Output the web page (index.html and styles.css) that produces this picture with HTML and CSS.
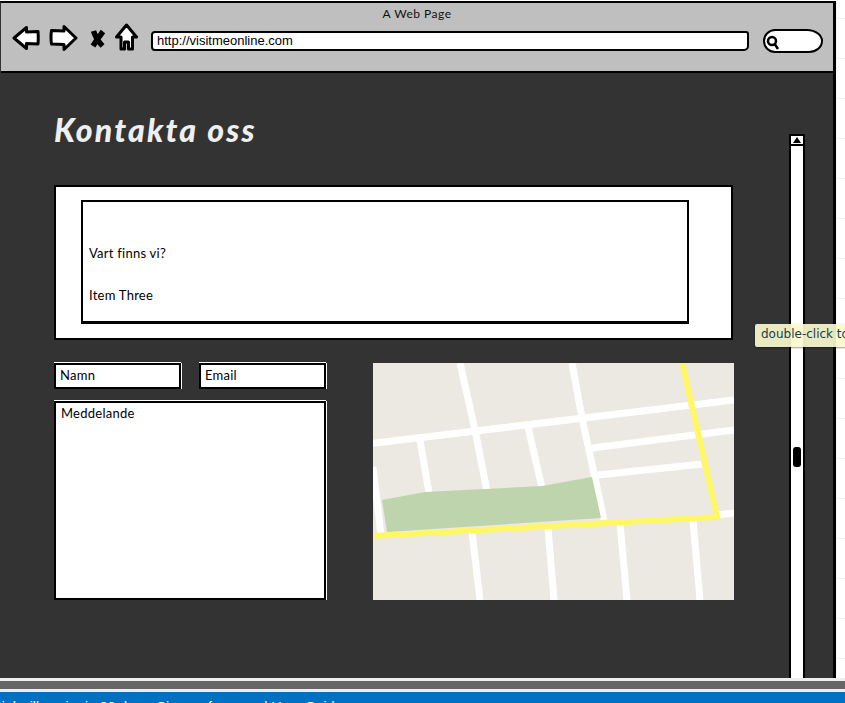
FILE: index.html
```html
<!DOCTYPE html>
<html lang="sv">
<head>
<meta charset="utf-8">
<title>A Web Page</title>
<link rel="stylesheet" href="styles.css">
</head>
<body>
<div class="stage">
  <div class="window">
    <header class="chrome">
      <div class="chrome-title">A Web Page</div>
      <div class="toolbar">
        <svg class="ico ico-back" viewBox="0 0 28 26"><path d="M2 13 L14.500 2.500 L14.500 7 L26 6.500 Q26.500 13 26 19 L14.500 18.500 L14.500 23.500 Z"/></svg>
        <svg class="ico ico-fwd" viewBox="0 0 29 28"><path d="M27 14 L15 2.500 L15 7 L2.500 6.500 Q1.500 13 2.500 20 L15 20.500 L15 25.500 Z"/></svg>
        <svg class="ico ico-x" viewBox="0 0 16 19"><path d="M3.500 2 Q6 10 12.500 17 M13 2.500 Q8 9 3 17"/></svg>
        <svg class="ico ico-home" viewBox="0 0 23 28"><path d="M11.500 2 L21.500 14 L17.500 14 L17.500 26 L13.500 26 L13.500 19 L9.500 19 L9.500 26 L6 26 L6 14 L1.500 14 Z"/></svg>
        <div class="url">http://visitmeonline.com</div>
        <div class="search">
          <svg class="search-ico" viewBox="0 0 14 15"><circle cx="6" cy="6" r="4"/><path d="M9 9.500 L12 14"/></svg>
        </div>
      </div>
    </header>
    <main class="content">
      <div class="column">
        <h1 class="heading">Kontakta oss</h1>
        <section class="panel">
          <div class="panel-inner">
            <p class="item">Vart finns vi?</p>
            <p class="item">Item Three</p>
          </div>
        </section>
        <div class="lower">
          <form class="contact">
            <div class="fields">
              <div class="field">Namn</div>
              <div class="field">Email</div>
            </div>
            <div class="message">Meddelande</div>
          </form>
          <svg class="map" viewBox="0 0 361 237">
            <rect class="map-land" width="361" height="237"/>
            <g class="map-roads">
              <path d="M0 80.300 L361 37"/>
              <path d="M87 0 L102 67 L114 128"/>
              <path d="M99 169 L107 237"/>
              <path d="M199 0 L209 55 L222 115 L231 157"/>
              <path d="M47 77 L56 130"/>
              <path d="M155 64 L169 125"/>
              <path d="M0 104 L8 172"/>
              <path d="M219 85 L361 67"/>
              <path d="M225 112 L329 101"/>
              <path d="M175 164 L181 237"/>
              <path d="M247 160 L254 237"/>
              <path d="M320 157 L327 237"/>
              <path d="M345 152 L361 150"/>
            </g>
            <path class="map-park" d="M9 137 L52 129 L169 123 L219 114 L228 155 L14 169 Z"/>
            <path class="map-highway" d="M0 173 L344 154 L309 0"/>
          </svg>
        </div>
      </div>
      <div class="scrollbar">
        <div class="scroll-up"><span class="scroll-arrow"></span></div>
        <div class="scroll-thumb"></div>
      </div>
    </main>
  </div>
  <div class="tooltip">double-click to edit</div>
  <div class="gutter"></div>
</div>
<footer class="bottom">
  <div class="bottom-grey"></div>
  <div class="notice"><span class="notice-text">Your trial will expire in 30 days. Sign up for more | User Guide</span></div>
</footer>
</body>
</html>
```
FILE: styles.css
```css
* { box-sizing: border-box; }
html, body { margin: 0; height: 100%; }
body {
  width: 845px;
  height: 703px;
  overflow: hidden;
  display: flex;
  flex-direction: column;
  background: #fff;
  font-family: "Lato", "Open Sans", sans-serif;
}
.stage {
  position: relative;
  flex: none;
  height: 678px;
  display: flex;
  overflow: hidden;
  padding-top: 1px;
}
.window {
  flex: none;
  width: 836px;
  display: flex;
  flex-direction: column;
  border-top: 2px solid #000;
  border-right: 3px solid #000;
  border-left: 1px solid #333;
  background: #333;
}
.gutter {
  flex: 1;
  margin-top: -1px;
  background-color: #fff;
  background-image:
    linear-gradient(#f2f2f2 1px, transparent 1px),
    linear-gradient(90deg, #f7f7f7 1px, transparent 1px);
  background-size: 40px 40px;
  background-position: 0 18px;
}
.chrome {
  flex: none;
  height: 70px;
  background: #bfbfbf;
  border-bottom: 2px solid #000;
  display: flex;
  flex-direction: column;
}
.chrome-title {
  text-align: center;
  font-size: 12px;
  line-height: 15px;
  padding-top: 3px;
  height: 20px;
  color: #111;
  letter-spacing: .5px;
}
.toolbar {
  display: flex;
  align-items: center;
  padding-left: 11px;
  height: 30px;
}
.ico { flex: none; fill: #fff; stroke: #000; stroke-width: 3; stroke-linejoin: round; }
.ico-back { width: 28px; height: 26px; margin-right: 9px; }
.ico-fwd { width: 29px; height: 28px; margin-right: 12px; margin-top: -1px; }
.ico-x { width: 16px; height: 19px; margin-right: 9px; stroke-width: 5.500; fill: none; }
.ico-home { width: 23px; height: 28px; margin-right: 13px; margin-top: -2px; }
.url {
  flex: none;
  width: 598px;
  height: 20px;
  margin-top: 6px;
  margin-right: 14px;
  background: #fff;
  border: 2px solid #000;
  border-radius: 4px 3px 5px 4px;
  font-family: "Liberation Sans", Arial, sans-serif;
  font-size: 13px;
  line-height: 15px;
  padding-left: 4px;
  color: #000;
}
.search {
  flex: none;
  width: 60px;
  height: 24px;
  margin-top: 5px;
  background: #fff;
  border: 2px solid #000;
  border-radius: 12px 16px 14px 12px / 12px 12px 12px 12px;
  display: flex;
  align-items: center;
  padding-left: 1px;
}
.search-ico { width: 14px; height: 15px; fill: none; stroke: #000; stroke-width: 2.500; margin-top: 3px; }
.content {
  flex: 1;
  display: flex;
  min-height: 0;
  padding-left: 53px;
}
.column { flex: none; width: 681px; }
.heading {
  margin: 0;
  height: 112px;
  padding-top: 37px;
  font-size: 32px;
  line-height: 40px;
  font-weight: 900;
  font-style: italic;
  letter-spacing: 2.200px;
  color: #efefef;
}
.panel {
  width: 679px;
  height: 155px;
  background: #fff;
  border: 2px solid #000;
  padding: 13px 42px 14px 25px;
}
.panel-inner {
  height: 124px;
  border: 2px solid #000;
  border-bottom-width: 3px;
  padding: 42px 6px 0;
}
.item {
  margin: 0 0 24px;
  font-size: 13px;
  line-height: 18px;
  color: #000;
  letter-spacing: .25px;
}
.lower {
  display: flex;
  margin-top: 23px;
}
.contact {
  flex: none;
  width: 272px;
  margin-right: 47px;
}
.fields {
  display: flex;
  justify-content: space-between;
  margin-bottom: 12px;
}
.field, .message {
  background: #fff;
  border: 2px solid #000;
  box-shadow: 0 -1px 0 #fff, 1px 0 0 #fff;
  font-size: 13px;
  letter-spacing: .25px;
  color: #000;
}
.field {
  width: 127px;
  height: 26px;
  line-height: 20px;
  padding-left: 4px;
}
.message {
  height: 199px;
  line-height: 18px;
  padding: 1px 5px;
}
.map { flex: none; width: 361px; height: 237px; display: block; }
.map-land { fill: #ebe9e1; }
.map-roads { fill: none; stroke: #fff; stroke-width: 7; }
.map-park { fill: #bed4ad; }
.map-highway { fill: none; stroke: #fff768; stroke-width: 6; }
.scrollbar {
  position: relative;
  flex: none;
  width: 16px;
  margin-top: 61px;
  margin-left: 54px;
  background: #fff;
  border-left: 2px solid #000;
  border-right: 2px solid #000;
  border-top: 2px solid #000;
}
.scroll-up {
  height: 10px;
  border-bottom: 2px solid #000;
  display: flex;
  justify-content: center;
  align-items: center;
}
.scroll-arrow {
  width: 0;
  height: 0;
  border-left: 4px solid transparent;
  border-right: 4px solid transparent;
  border-bottom: 6px solid #000;
}
.scroll-thumb {
  position: absolute;
  left: 2px;
  top: 311px;
  width: 8px;
  height: 20px;
  background: #000;
  border-radius: 3px;
}
.tooltip {
  position: absolute;
  left: 755px;
  top: 324px;
  height: 23px;
  width: 140px;
  background: rgba(250, 250, 205, .92);
  border-radius: 2px;
  box-shadow: 0 1px 2px rgba(0, 0, 0, .4);
  padding-left: 6px;
  font-family: "DejaVu Sans", sans-serif;
  font-size: 12px;
  line-height: 21px;
  color: #1c3a4a;
  white-space: nowrap;
}
.bottom {
  flex: none;
  height: 25px;
  background: #eee;
  padding-top: 3px;
  display: flex;
  flex-direction: column;
}
.bottom-grey { height: 8px; background: #666; }
.notice {
  margin-top: 3px;
  flex: 1;
  background: #0070c0;
  overflow: hidden;
  padding-top: 7px;
  color: #fff;
  font-family: "Liberation Sans", Arial, sans-serif;
  font-size: 14px;
  line-height: 16px;
  white-space: nowrap;
}
.notice-text { display: block; margin-left: -39px; }
```
